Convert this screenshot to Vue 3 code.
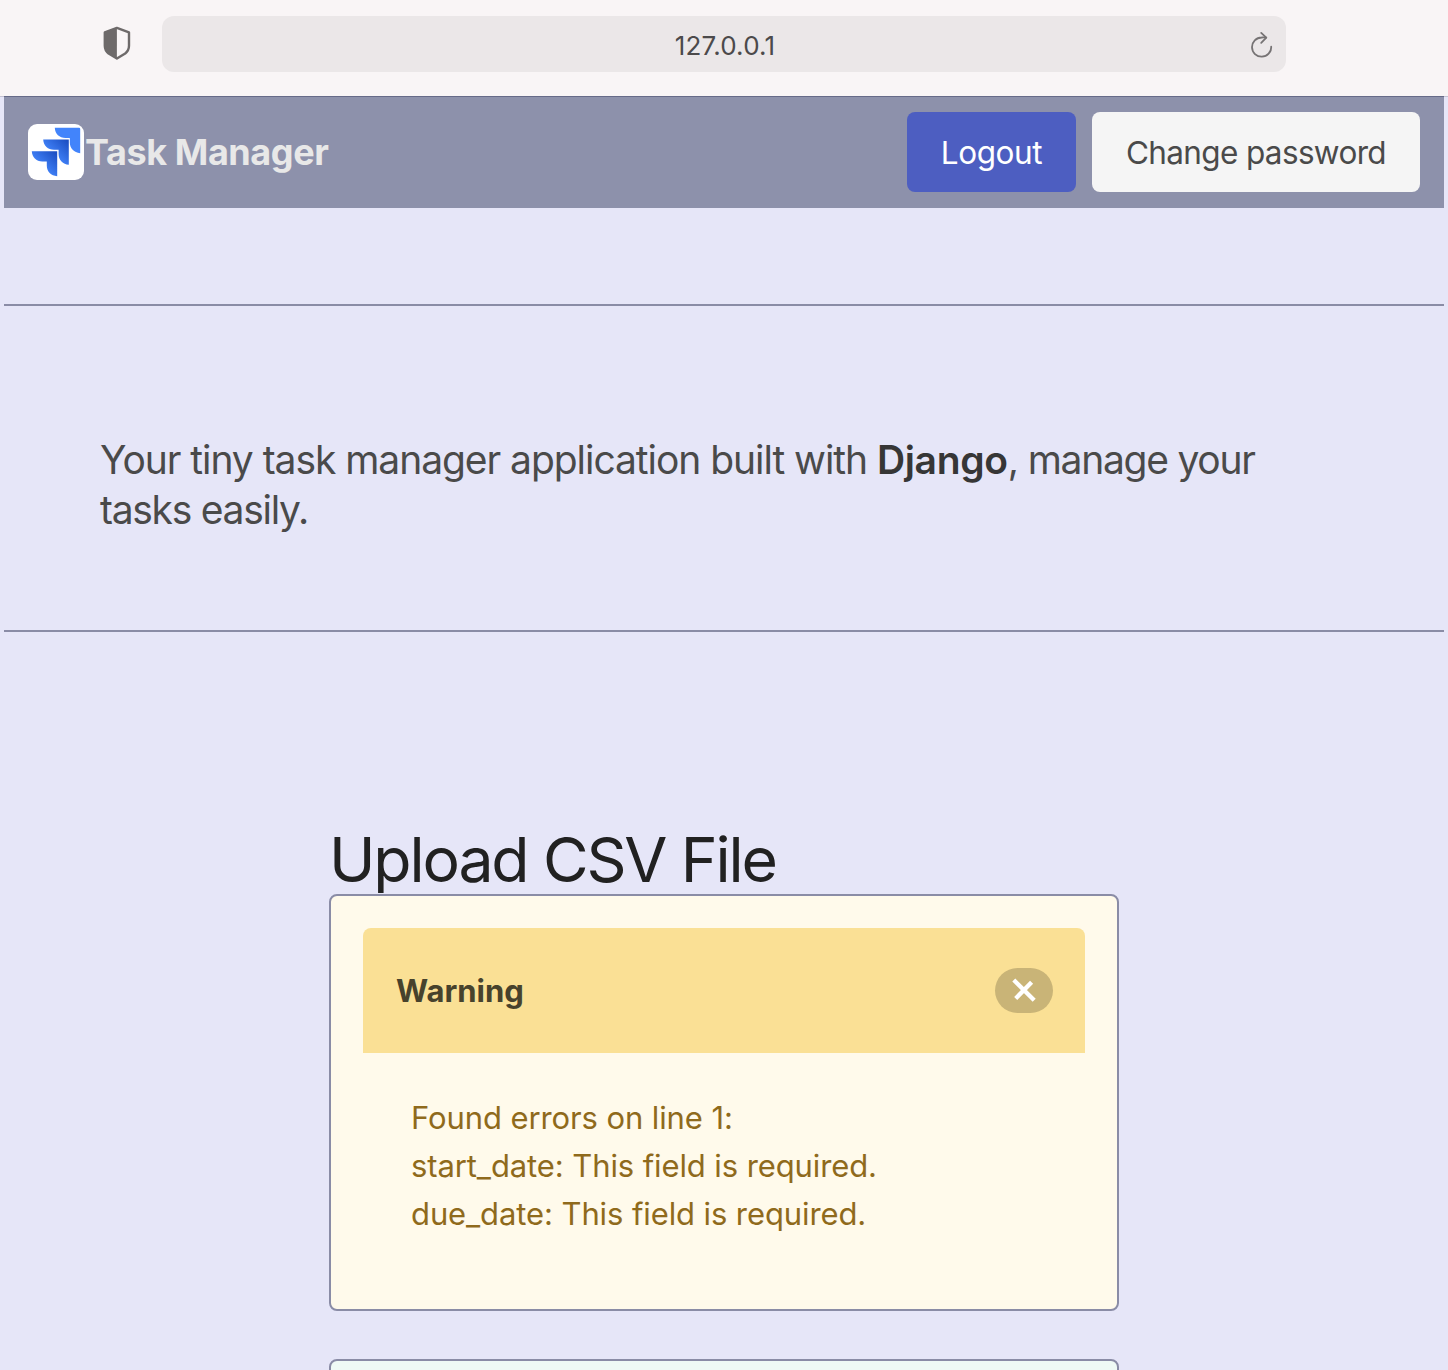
<script setup>
const errors = [
  'Found errors on line 1:',
  'start_date: This field is required.',
  'due_date: This field is required.',
]
</script>

<template>
  <div class="window">
    <header class="browser-bar">
      <svg class="shield" viewBox="0 0 30 36" width="30" height="36">
        <path d="M14.9 1.9 27 6.4V19.8Q27 24.5 23.2 27.5L14.9 32.6 6.6 27.5Q2.8 24.5 2.8 19.8V6.4Z" fill="none" stroke="#6e6a6a" stroke-width="2.4" stroke-linejoin="round" />
        <path d="M14.9 1.5 2.5 6.1V20Q2.5 24.5 6.3 27.5L14.9 33Z" fill="#6e6a6a" />
      </svg>
      <div class="address">
        <span class="url">127.0.0.1</span>
        <svg class="reload" viewBox="0 0 24 28" width="24" height="28" fill="none" stroke="#767374" stroke-width="1.8" stroke-linecap="round" stroke-linejoin="round">
          <path d="M21.2 15.7A9.6 9.6 0 1 1 11.6 6.5Q14 6.3 16.2 6.7" />
          <path d="M11.2 1.9 16.3 6.7 11.2 11.9" />
        </svg>
      </div>
    </header>

    <nav class="navbar">
      <a class="brand">
        <svg class="logo" viewBox="0 0 56 56" width="56" height="56">
          <defs>
            <linearGradient id="mid" x1="1" y1="0" x2=".35" y2=".65">
              <stop offset=".1" stop-color="#1d50c4" />
              <stop offset="1" stop-color="#4284fb" />
            </linearGradient>
          </defs>
          <rect width="56" height="56" rx="9" fill="#fff" />
          <path d="M26.8 3.8H51a1.2 1.2 0 0 1 1.2 1.2V29.2C46 28.4 41.8 24 41.8 18.4V14H37.5C31.5 14 27 10 26.8 3.8Z" fill="#4284fb" />
          <path d="M15.2 15.5H40.8V40.8C35 40.2 30.6 36 30.6 30V25.8H26C20 25.8 15.5 21.6 15.2 15.5Z" fill="url(#mid)" />
          <path d="M3.8 27.2H29.2V52.2C23 51.8 18.8 47.4 18.8 41.8V37.5H14.3C8.2 37.5 4 33 3.8 27.2Z" fill="url(#mid)" />
        </svg>
        <span class="brand-name">Task Manager</span>
      </a>
      <div class="actions">
        <button class="btn primary"><span>Logout</span></button>
        <button class="btn light"><span>Change password</span></button>
      </div>
    </nav>

    <section class="intro">
      <p>Your tiny task manager application built with <strong>Django</strong>, <span class="tail">manage your<br>tasks easily.</span></p>
    </section>

    <main class="content">
      <h1>Upload CSV File</h1>
      <section class="card warning">
        <div class="message-head">
          <strong>Warning</strong>
          <button class="close" aria-label="Close">
            <svg viewBox="0 0 58 45" width="58" height="45" stroke="#fff" stroke-width="4.3">
              <path d="M18.8 12 39.2 32.3M36.6 14.2 20.7 30.5" />
            </svg>
          </button>
        </div>
        <div class="message-body">
          <div v-for="line in errors" :key="line">{{ line }}</div>
        </div>
      </section>
      <section class="card success"></section>
    </main>
  </div>
</template>

<style>
body {
  margin: 0;
  background: #e6e6f8;
}
</style>

<style scoped>
.window {
  height: 1370px;
  overflow: hidden;
  background: #e6e6f8;
  font-family: Inter, "Liberation Sans", sans-serif;
  color: #4a4a4a;
}
.browser-bar {
  box-sizing: border-box;
  height: 97px;
  padding: 16px 162px 0 102px;
  display: flex;
  background: #f9f5f6;
  border-bottom: 1px solid #c4c2d2;
}
.shield {
  margin: 10px 30px 0 0;
}
.address {
  box-sizing: border-box;
  flex: 1;
  height: 56px;
  padding: 0 12px 0 38px;
  display: flex;
  align-items: center;
  border-radius: 12px;
  background: #ebe7e8;
}
.reload {
  margin-top: 2px;
}
.url {
  flex: 1;
  text-align: center;
  font-size: 26px;
  line-height: 56px;
  padding-top: 4px;
  letter-spacing: 0.2px;
  color: #4c4a4b;
}
.navbar {
  box-sizing: border-box;
  height: 112px;
  margin: -1px 4px 0;
  padding: 0 24px 1px;
  display: flex;
  justify-content: space-between;
  align-items: center;
  background: #8d91ab;
  border-top: 1px solid #666a88;
}
.brand {
  display: flex;
  align-items: center;
}
.brand-name {
  margin-left: 1px;
  font-size: 36px;
  font-weight: 700;
  line-height: 56px;
  letter-spacing: -0.42px;
  color: #e8e8e8;
}
.actions {
  display: flex;
  gap: 16px;
}
.btn {
  width: 169px;
  height: 80px;
  padding: 2px 0 0;
  border: 0;
  border-radius: 8px;
  font: 400 31.5px/1 Inter, "Liberation Sans", sans-serif;
  letter-spacing: -0.4px;
}
.btn.primary {
  background: #4d5ec1;
  color: #fff;
}
.btn.light {
  width: 328px;
  background: #f5f5f5;
  color: #4a4a4a;
  letter-spacing: -0.65px;
}
.intro {
  box-sizing: border-box;
  height: 328px;
  margin: 96px 4px 0;
  padding: 129px 96px 0;
  border-top: 2px solid #8a8ca6;
  border-bottom: 2px solid #8a8ca6;
}
.intro p {
  margin: 0;
  font-size: 39px;
  line-height: 50px;
  letter-spacing: -1.05px;
  white-space: nowrap;
}
.intro strong {
  font-weight: 600;
  letter-spacing: -0.35px;
  color: #363636;
}
.tail {
  letter-spacing: -1.28px;
}
.content {
  width: 790px;
  margin: 0 auto;
  padding-top: 189px;
}
h1 {
  height: 72px;
  margin: 0;
  overflow: hidden;
  font-size: 62.5px;
  line-height: 76px;
  letter-spacing: -2.15px;
  font-weight: 400;
  color: #212121;
  white-space: nowrap;
}
.card {
  box-sizing: border-box;
  border: 2px solid #8a8ca6;
  border-radius: 8px;
}
.warning {
  height: 417px;
  margin-top: 1px;
  padding: 32px;
  background: #fffaeb;
}
.message-head {
  box-sizing: border-box;
  height: 125px;
  padding: 0 32px 0 33px;
  display: flex;
  align-items: center;
  justify-content: space-between;
  border-radius: 8px 8px 0 0;
  background: #fae095;
}
.message-head strong {
  font-size: 31px;
  font-weight: 700;
  color: #47422c;
}
.close {
  width: 58px;
  height: 45px;
  padding: 0;
  border: 0;
  border-radius: 23px;
  background: #c9b477;
}
.close svg {
  display: block;
}
.message-body {
  padding: 41px 48px 0;
  font-size: 31px;
  line-height: 48px;
  letter-spacing: -0.1px;
  color: #8f6a1c;
  white-space: nowrap;
}
.success {
  height: 100px;
  margin-top: 48px;
  background: #effaf5;
}
</style>
